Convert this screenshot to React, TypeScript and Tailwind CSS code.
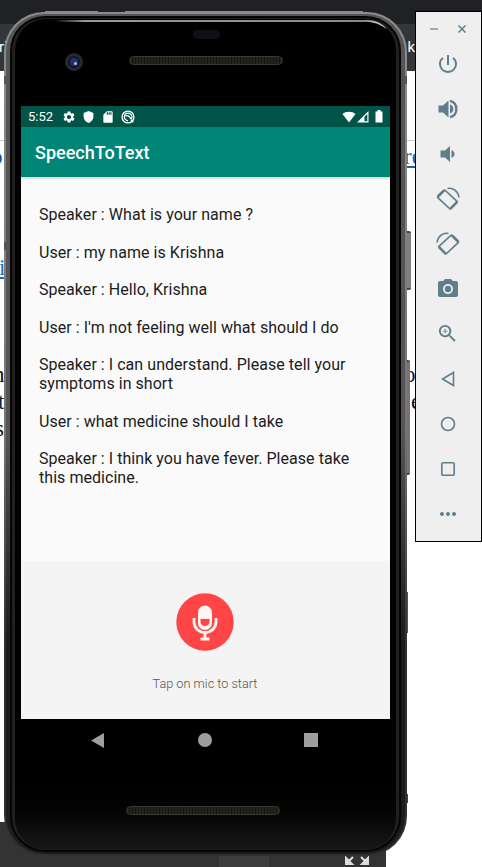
import React from "react";
import { MdSettings, MdSdCard, MdPowerSettingsNew, MdCameraAlt, MdZoomIn, MdMoreHoriz } from "react-icons/md";

const messages = [
  "Speaker : What is your name ?",
  "User : my name is Krishna",
  "Speaker : Hello, Krishna",
  "User : I'm not feeling well what should I do",
  "Speaker : I can understand. Please tell your symptoms in short",
  "User : what medicine should I take",
  "Speaker : I think you have fever. Please take this medicine.",
];

/** Browser window that is partly hidden behind the emulator. */
function BrowserWindow() {
  return (
    <div className="absolute inset-0 flex flex-col overflow-hidden bg-white">
      <div className="h-6 shrink-0 bg-[#202124]" />
      <div className="flex h-[47px] shrink-0 items-center justify-between bg-[#35363a] pr-[67px] font-['Roboto',sans-serif] text-[15px] text-white">
        <span className="-ml-[1px]">ri</span>
        <span>k</span>
      </div>
      <div className="h-[70px] shrink-0 border-b border-[#ccc]" />
      <div className="flex flex-1 items-start justify-between pr-[60px] font-['Liberation_Serif',serif] text-[23px] leading-[27px]">
        <div className="flex flex-col items-start pt-[2px]">
          <span className="-ml-[9px] text-[#1a4fa0]">o</span>
          <span className="-ml-[1px] mt-[84px] text-[#1a6fc4] underline">i</span>
          <span className="-ml-[7px] mt-[80px] text-[#111]">h</span>
          <span className="-ml-[2px] text-[#0b2545]">t</span>
          <span className="-ml-[5px] text-[#111]">s</span>
        </div>
        <div className="flex w-[18px] flex-col pt-[2px]">
          <span className="text-[#1a5fb4] underline">re</span>
          <span className="mt-[191px] text-[#0b1c45]">o</span>
          <span className="pl-[7px] text-[#111]">e</span>
        </div>
      </div>
      <div className="flex h-[45px] w-[386px] shrink-0 items-end justify-end bg-[#333] pr-4">
        <div className="mr-[75px] h-full w-[50px] bg-[#3d3d3d]" />
        <svg className="h-[13px] w-[26px]" viewBox="0 0 26 13" fill="#ddd" stroke="#ddd" strokeWidth="2">
          <path d="M9 3 4 8M2 4v6h6zM17 3l5 5M24 4v6h-6z" />
        </svg>
      </div>
    </div>
  );
}

function StatusBar() {
  return (
    <div className="flex h-[21px] shrink-0 items-center bg-[#005548] px-[7px] text-white">
      <span className="w-[34px] text-[13px] leading-none">5:52</span>
      <div className="flex gap-[6px]">
        <MdSettings className="h-[14px] w-[14px]" />
        <svg className="h-[14px] w-[13px]" viewBox="0 0 24 24" fill="currentColor">
          <path d="M12 1 3 4.5V11c0 5.6 3.8 10.5 9 12 5.200-1.500 9-6.400 9-12V4.500z" />
        </svg>
        <MdSdCard className="h-[14px] w-[14px]" />
        <svg className="h-[14px] w-[14px]" viewBox="0 0 24 24" fill="none" stroke="currentColor" strokeWidth="2.300">
          <circle cx="12" cy="12" r="10.200" />
          <path d="M17 16.500A6.500 6.500 0 1 0 12 18.500M8 10h5l5 6M17 17l4 4" />
        </svg>
      </div>
      <svg className="ml-auto h-[12px] w-[14px]" viewBox="0 0 14 12" fill="currentColor">
        <path d="M.5 3C4 .1 10 .1 13.500 3L7 11.500z" />
      </svg>
      <svg className="ml-[1px] h-[12px] w-[12px]" viewBox="0 0 12 12">
        <path fill="currentColor" fillRule="evenodd" d="M0 11.500 11.500 0v11.500zM7.500 10.300h2.800V3L7.500 5.800z" />
      </svg>
      <svg className="ml-[6px] h-[13px] w-[8px]" viewBox="0 0 8 13" fill="currentColor">
        <path d="M2.500 0h3v1.500H7.500V12.500H.5V1.500h2z" />
      </svg>
    </div>
  );
}

function MicButton() {
  return (
    <svg className="h-[58px] w-[58px]" viewBox="0 0 58 58">
      <circle cx="29" cy="29" r="28.700" fill="#ff4545" />
      <path d="M22 19.500a7 7 0 0 1 14 0v10.500a7 7 0 0 1-14 0z" fill="#fff5f2" />
      <path d="M24.500 26h9v2.500a4.500 4.500 0 0 1-9 0z" fill="#ff4545" />
      <path d="M18 25v4a11 10.500 0 0 0 22 0V25" fill="none" stroke="#fff5f2" strokeWidth="2.800" />
      <path d="M29 39.500v6M24.500 46h9" fill="none" stroke="#fff5f2" strokeWidth="2.800" />
    </svg>
  );
}

function Screen() {
  return (
    <div className="ml-[17px] flex h-[613px] w-[369px] shrink-0 flex-col bg-[#fafafa] font-['Roboto',sans-serif]">
      <StatusBar />
      <header className="z-10 flex h-[50px] shrink-0 items-center bg-[#008577] px-[14px] text-white shadow-[0_1px_3px_rgba(0,0,0,0.2)]">
        <h1 className="pt-[2px] text-[18px] font-medium leading-none">SpeechToText</h1>
      </header>
      <main className="flex flex-1 flex-col gap-[18.8px] pl-[18px] pr-4 pt-[29px] text-[16px] leading-[18.8px] tracking-[0.045px] text-[#1c1c1c]">
        {messages.map((m) => (
          <p key={m}>{m}</p>
        ))}
      </main>
      <footer className="flex h-[158px] shrink-0 flex-col items-center bg-[#f4f4f4] pr-[1px] pt-[32px]">
        <MicButton />
        <p className="mt-[25px] text-[12.700px] font-light leading-[16px] text-[#555]">Tap on mic to start</p>
      </footer>
    </div>
  );
}

function Speaker() {
  return (
    <div className="h-[9px] w-[154px] rounded-full border border-[#393932] bg-[repeating-linear-gradient(90deg,#24241e_0_2px,#151512_2px_3px)]" />
  );
}

/** Side keys on the right edge of the phone. */
function SideKeys() {
  return (
    <div className="flex flex-col items-end justify-self-end pt-[220px] [grid-area:1/1] -mr-[4px]">
      <div className="h-[59px] w-[6px] rounded-r-xs border-y-2 border-[#444] bg-[#808080]" />
      <div className="mr-[1px] mt-[70px] h-[115px] w-[6px] rounded-r-xs border-y-2 border-[#444] bg-[#747474]" />
      <div className="mr-[3px] mt-[117px] h-[41px] w-[3px] bg-[#555]" />
      <div className="mr-[3px] mt-[161px] h-[9px] w-[3px] bg-[#444]" />
    </div>
  );
}

function Bezel() {
  return (
    <div className="mt-[1px] overflow-hidden rounded-[40px] bg-linear-to-b from-[#8c8c8c] via-[#757575] via-50% to-[#303030] to-75% p-[2px] [grid-area:1/1]">
      <div className="h-full rounded-[38px] bg-linear-to-b from-[#555] via-[#555] via-50% to-[#1c1c1c] to-75% px-[4px] pb-[2px] pt-[2px]">
        <div className="h-full rounded-[35px] bg-[#050505] p-[2px]">
          <div className="h-full rounded-[33px] bg-[#202020] px-[3px] pt-[1px]">
            <div className="h-full rounded-[31px] bg-linear-to-b from-black from-90% to-[#191919]" />
          </div>
        </div>
      </div>
    </div>
  );
}

function Phone() {
  return (
    <div className="absolute left-[4px] top-[11px] grid h-[845px] w-[403px]">
      <SideKeys />
      <div className="flex gap-[27px] pl-[41px] [grid-area:1/1]">
        <div className="h-[3px] w-[53px] bg-[#8a8a8a]" />
        <div className="h-[3px] w-[238px] bg-[#8a8a8a]" />
      </div>
      <Bezel />
      <div className="flex items-start pl-[50px] pt-[9px] [grid-area:1/1]">
        <div className="h-[1.500px] w-[311px] bg-linear-to-r from-transparent via-[#999] via-10% to-[#888]" />
        <svg className="h-[10px] w-[24px]" viewBox="0 0 24 10">
          <path d="M0 0C10 0 18 3 22 9.500 16 4.500 9 2 0 1.500z" fill="#bbb" />
        </svg>
      </div>
      <div className="flex flex-col gap-[158px] pt-[65px] [grid-area:1/1]">
        <div className="flex justify-between">
          <div className="h-[8px] w-[6px] bg-[#555]" />
          <div className="h-[8px] w-[6px] bg-[#555]" />
        </div>
        <div className="h-[8px] w-[6px] bg-[#555]" />
      </div>
      <div className="flex flex-col [grid-area:1/1]">
        <div className="flex h-[95px] shrink-0 items-start pl-[61px]">
          <div className="mt-[42px] flex h-[18px] w-[18px] items-center justify-center rounded-full border-[3px] border-[#29292b] bg-[#10162f]">
            <div className="flex h-[8px] w-[8px] items-end justify-end rounded-full bg-[#22316e] p-px">
              <div className="h-[3px] w-[3px] rounded-full bg-[#adbdf5]" />
            </div>
          </div>
          <div className="ml-[46px] flex flex-col items-center pt-[19px]">
            <div className="mb-[17px] h-[9px] w-[27px] rounded-full bg-[#0f0f15]" />
            <Speaker />
          </div>
        </div>
        <Screen />
        <nav className="flex h-[42px] shrink-0 items-center justify-between pl-[87px] pr-[89px]">
          <svg className="h-[15px] w-[13px]" viewBox="0 0 13 15"><path d="M13 0v15L0 7.500z" fill="#9e9e9e" /></svg>
          <div className="ml-[2px] h-[14px] w-[14px] rounded-full bg-[#9e9e9e]" />
          <div className="h-[14px] w-[14px] bg-[#9e9e9e]" />
        </nav>
        <div className="ml-[122px] mt-[45px]"><Speaker /></div>
      </div>
    </div>
  );
}

function RotateIcon({ flipped = false }: { flipped?: boolean }) {
  return (
    <svg className={flipped ? "h-6 w-6 -scale-x-100" : "h-6 w-6"} viewBox="0 0 24 24" fill="none" stroke="currentColor">
      <path d="M8.800 3 1.500 10.300 14 22l7.300-7.300z" strokeWidth="1.700" strokeLinejoin="round" />
      <path d="M1.800 9.500 8 3.300M14.300 21.800l6.700-6.700" strokeWidth="2.500" />
      <path d="M11.500 1.500c5.500-1 10.500 2.500 11.500 9" strokeWidth="1.600" />
    </svg>
  );
}

function VolumeIcon({ loud = false }: { loud?: boolean }) {
  return (
    <svg className="h-[22px] w-[22px]" viewBox="0 0 22 22" fill="none">
      {loud ? (
        <>
          <path d="M1.500 7.500h4.500L11.500 2.500v17l-5.500-5H1.500z" fill="currentColor" />
          <path d="M13 6.500c4.500 1.500 4.500 7.500 0 9z" fill="currentColor" />
          <path d="M13 2.800c8.500 2 8.500 14.400 0 16.400" stroke="currentColor" strokeWidth="2.400" />
        </>
      ) : (
        <>
          <path d="M3.500 7.500h4.500L13 3v16l-5-4.500H3.500z" fill="currentColor" />
          <path d="M14.500 7c4 1.500 4 6.500 0 8z" fill="currentColor" />
        </>
      )}
    </svg>
  );
}

function Toolbar() {
  const tools = [
    <MdPowerSettingsNew className="h-6 w-6" />,
    <VolumeIcon loud />,
    <VolumeIcon />,
    <RotateIcon />,
    <RotateIcon flipped />,
    <MdCameraAlt className="h-6 w-6" />,
    <MdZoomIn className="h-[23px] w-[23px]" />,
    <svg className="h-4 w-4" viewBox="0 0 16 16" fill="none" stroke="currentColor" strokeWidth="1.600"><path d="M13.500 1.500v13L2.500 8z" /></svg>,
    <svg className="h-4 w-4" viewBox="0 0 16 16" fill="none" stroke="currentColor" strokeWidth="1.600"><circle cx="8" cy="8" r="6.500" /></svg>,
    <svg className="h-4 w-4" viewBox="0 0 16 16" fill="none" stroke="currentColor" strokeWidth="1.600"><rect x="1.800" y="1.800" width="12.400" height="12.400" rx="1" /></svg>,
    <MdMoreHoriz className="h-6 w-6" />,
  ];
  return (
    <aside className="absolute left-[415px] top-[11px] h-[531px] w-[67px] border border-black bg-[#efefef] text-[#607d8b]">
      <div className="flex h-[29px] items-center justify-between pl-[14px] pr-[15px] pt-[5px]">
        <div className="h-[1.500px] w-[8px] bg-[#9aabb4]" />
        <svg className="h-[8px] w-[8px]" viewBox="0 0 8 8" stroke="currentColor" strokeWidth="1.500"><path d="m.5.5 7 7M7.500.5l-7 7" /></svg>
      </div>
      <div className="flex flex-col items-center pr-[2px]">
        {tools.map((tool, i) => (
          <div key={i} className="flex h-[45px] w-full items-center justify-center">{tool}</div>
        ))}
      </div>
    </aside>
  );
}

export default function App() {
  return (
    <div className="relative h-[867px] w-[482px] overflow-hidden">
      <BrowserWindow />
      <Phone />
      <Toolbar />
    </div>
  );
}
